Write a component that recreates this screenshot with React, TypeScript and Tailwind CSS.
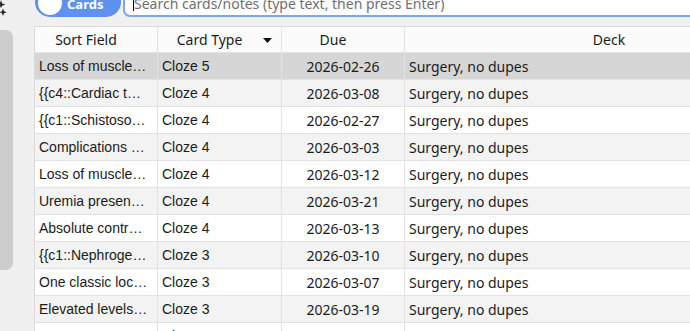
import React from "react";

const rows = [
  ["Loss of muscle…", "Cloze 5", "2026-02-26"],
  ["{{c4::Cardiac t…", "Cloze 4", "2026-03-08"],
  ["{{c1::Schistoso…", "Cloze 4", "2026-02-27"],
  ["Complications …", "Cloze 4", "2026-03-03"],
  ["Loss of muscle…", "Cloze 4", "2026-03-12"],
  ["Uremia presen…", "Cloze 4", "2026-03-21"],
  ["Absolute contr…", "Cloze 4", "2026-03-13"],
  ["{{c1::Nephroge…", "Cloze 3", "2026-03-10"],
  ["One classic loc…", "Cloze 3", "2026-03-07"],
  ["Elevated levels…", "Cloze 3", "2026-03-19"],
  ["Most common c…", "Cloze 3", "2026-03-15"],
];

const arial = { fontFamily: '"Liberation Sans", Arial, sans-serif' };

export default function App() {
  return (
    <div
      className="w-[690px] h-[331px] overflow-hidden bg-[#f0f0f0] flex"
      style={{ fontFamily: '"Noto Sans", "Open Sans", sans-serif' }}
    >
      {/* left strip */}
      <div className="w-[34px] shrink-0 flex flex-col">
        <svg width="8" height="16" viewBox="0 0 8 16" className="shrink-0">
          <path d="M1 0 L2.2 3.5 L5.5 4.6 L2.2 5.7 L1 8 L-0.2 5.7 L-3.5 4.6 L-0.2 3.5 Z" fill="#2a2a2a" />
          <path d="M3 8.5 L4.1 11.2 L6.8 12.2 L4.1 13.2 L3 15.9 L1.9 13.2 L-0.8 12.2 L1.9 11.2 Z" fill="#2a2a2a" />
        </svg>
        <div className="mt-[14px] -ml-[7px] w-[20px] h-[240px] rounded-[7px] bg-[#cdcdcd]" />
      </div>

      {/* main */}
      <div className="flex-1 min-w-0 flex flex-col">
        <div className="-mt-[13px] h-[30px] flex items-stretch shrink-0">
          <div className="ml-[1px] w-[86px] h-[30px] rounded-full bg-[#5f91ef] flex items-center pl-[3px] shrink-0">
            <div className="w-[24px] h-[24px] rounded-full bg-white mt-[1px]" />
            <span className="ml-[5px] text-white text-[13px] font-bold leading-none mt-[4px]">Cards</span>
          </div>
          <div className="ml-[2px] -mr-[12px] flex-1 h-[30px] rounded-[7px] border-2 border-[#7ea7f2] bg-white flex items-center pl-[8px]">
            <span className="w-px h-[13px] bg-black mt-[4px] shrink-0" />
            <span className="text-[14px] text-[#6f6f6f] mt-[4px] leading-none whitespace-nowrap">
              Search cards/notes (type text, then press Enter)
            </span>
          </div>
        </div>

        <div className="mt-[9px] w-[800px] border-l border-t border-[#d9d9d9] bg-white text-[14px] text-[#1b1b1b]">
          {/* header */}
          <div className="flex h-[26px] bg-[#fbfbfb] border-b border-[#e2e2e2]">
            <div className="w-[123px] border-r border-[#e2e2e2] flex items-center justify-center pr-[20px]">Sort Field</div>
            <div className="w-[124px] border-r border-[#e2e2e2] flex items-center justify-center pr-[20px] relative">
              Card Type
              <svg width="9" height="5" viewBox="0 0 9 5" className="absolute right-[9px] top-[11px]">
                <path d="M0 0 H9 L4.5 5 Z" fill="#111" />
              </svg>
            </div>
            <div className="w-[123px] border-r border-[#e2e2e2] flex items-center justify-center pr-[20px]">Due</div>
            <div className="w-[428px] flex items-center justify-center pr-[20px]">Deck</div>
          </div>
          {rows.map((r, i) => {
            const bg = i === 0 ? "bg-[#d6d6d6]" : i % 2 === 1 ? "bg-[#f3f3f3]" : "bg-white";
            return (
              <div key={i} className={`flex h-[27px] border-b border-[#e2e2e2] ${bg}`}>
                <div className="w-[123px] border-r border-[#e2e2e2] flex items-center pl-[4px] overflow-hidden whitespace-nowrap" style={arial}>
                  {r[0]}
                </div>
                <div className="w-[124px] border-r border-[#e2e2e2] flex items-center pl-[4px]" style={arial}>
                  {r[1]}
                </div>
                <div className="w-[123px] border-r border-[#e2e2e2] flex items-center justify-center">{r[2]}</div>
                <div className="w-[428px] flex items-center pl-[4px]">Surgery, no dupes</div>
              </div>
            );
          })}
        </div>
      </div>
    </div>
  );
}
